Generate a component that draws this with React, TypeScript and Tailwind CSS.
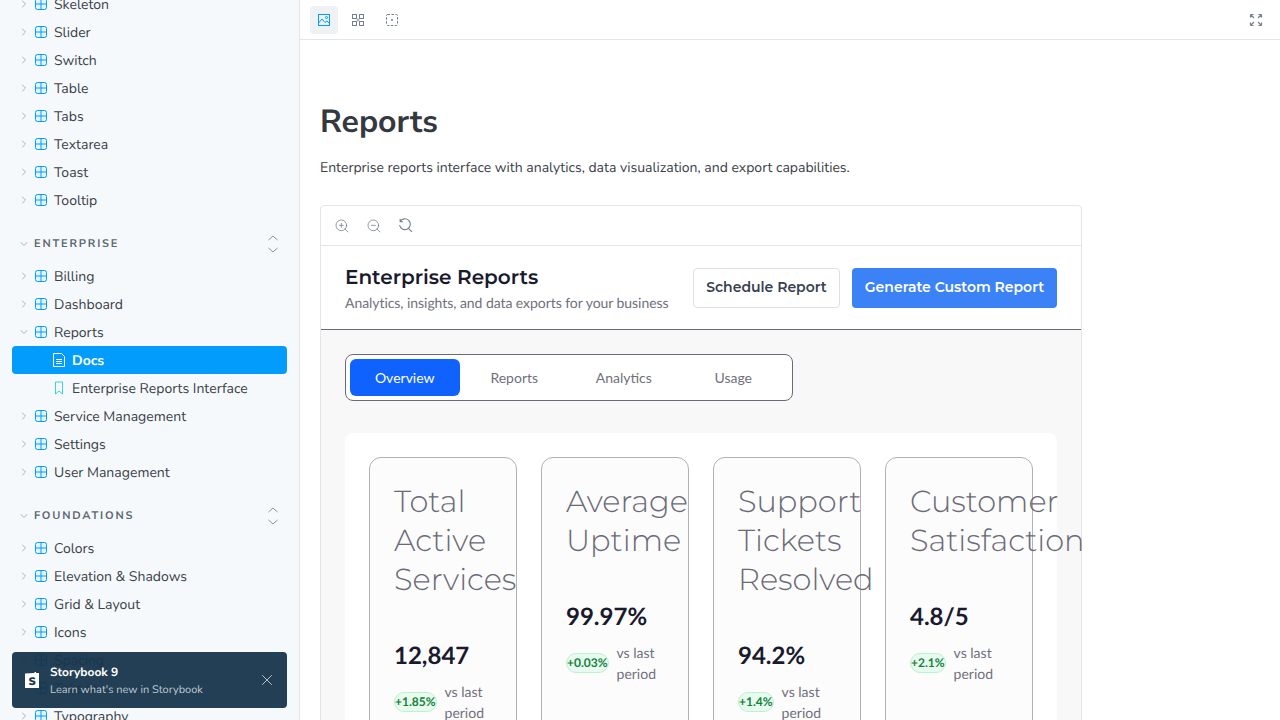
import { ChevronDown, ChevronRight, X, ZoomIn, ZoomOut } from "lucide-react";

const NUNITO = "font-['Nunito_Sans','Lato','Noto_Sans',sans-serif]";
const MONTSERRAT = "font-['Montserrat','Inter',sans-serif]";

const TOP_ITEMS = ["Skeleton", "Slider", "Switch", "Table", "Tabs", "Textarea", "Toast", "Tooltip"];
const BOTTOM_ITEMS = ["Colors", "Elevation & Shadows", "Grid & Layout", "Icons", "Spacing", "Tokens", "Typography"];

const STATS = [
  { title: "Total Active Services", value: "12,847", change: "+1.85%" },
  { title: "Average Uptime", value: "99.97%", change: "+0.03%" },
  { title: "Support Tickets Resolved", value: "94.2%", change: "+1.4%" },
  { title: "Customer Satisfaction", value: "4.8/5", change: "+2.1%" },
];

function ComponentIcon() {
  return (
    <svg width="12" height="12" viewBox="0 0 12 12" fill="none" className="shrink-0">
      <rect x="0.5" y="0.5" width="11" height="11" rx="2" fill="#e3f3ff" stroke="#029cfd" />
      <path d="M6 .5v11M.5 6h11" stroke="#029cfd" />
    </svg>
  );
}

function TreeRow({ label, open = false }: { label: string; open?: boolean }) {
  return (
    <div className="h-7 flex items-center pl-[18px] text-[#3a4148]">
      {open ? (
        <ChevronDown className="w-[12px] h-[12px] text-[#737f8c] mr-[5px]" strokeWidth={1.2} />
      ) : (
        <ChevronRight className="w-[12px] h-[12px] text-[#737f8c] mr-[5px]" strokeWidth={1.2} />
      )}
      <ComponentIcon />
      <span className="ml-[7px] mt-[2px] text-sm">{label}</span>
    </div>
  );
}

function SectionHeader({ label }: { label: string }) {
  return (
    <div className="h-[28px] flex items-center pl-[18px] pr-[19px]">
      <ChevronDown className="w-[12px] h-[12px] text-[#737f8c] mr-[4px]" strokeWidth={1.2} />
      <span className="text-[11px] font-bold tracking-[0.165em] text-[#5c6870]">{label}</span>
      <span className="ml-auto flex flex-col items-center text-[#8a95a0]">
        <svg width="14" height="20" viewBox="0 0 14 20" fill="none" stroke="currentColor">
          <path d="M2.5 6 7 2l4.5 4M2.5 14 7 18l4.5-4" />
        </svg>
      </span>
    </div>
  );
}

function Sidebar() {
  return (
    <aside className={`w-[300px] shrink-0 h-full bg-[#f6f9fc] border-r border-[#e3e6e8] overflow-hidden relative ${NUNITO}`}>
      <div className="-mt-[10px]">
        {TOP_ITEMS.map((item) => (
          <TreeRow key={item} label={item} />
        ))}
        <div className="mt-[16px] mb-[4px]">
          <SectionHeader label="ENTERPRISE" />
        </div>
        <TreeRow label="Billing" />
        <TreeRow label="Dashboard" />
        <TreeRow label="Reports" open />
        <div className="mx-[12px] h-7 rounded bg-[#029cfd] flex items-center pl-[40px] text-white">
          <svg width="14" height="14" viewBox="0 0 14 14" fill="none" stroke="white" className="shrink-0">
            <path d="M1.5 .5h8l3 3v10h-11z" />
            <path d="M4 6.5h6M4 8.5h6M4 10.5h6" />
          </svg>
          <span className="ml-[6px] mt-[2px] text-sm font-bold">Docs</span>
        </div>
        <div className="mx-[12px] h-7 flex items-center pl-[40px] text-[#3a4148]">
          <svg width="14" height="14" viewBox="0 0 14 14" fill="none" stroke="#37d5d3" className="shrink-0">
            <path d="M3.5 1h7v12L7 10l-3.5 3z" />
          </svg>
          <span className="ml-[6px] mt-[2px] text-sm">Enterprise Reports Interface</span>
        </div>
        <TreeRow label="Service Management" />
        <TreeRow label="Settings" />
        <TreeRow label="User Management" />
        <div className="mt-[16px] mb-[4px]">
          <SectionHeader label="FOUNDATIONS" />
        </div>
        {BOTTOM_ITEMS.map((item) => (
          <TreeRow key={item} label={item} />
        ))}
      </div>

      {/* What's new toast */}
      <div className="absolute left-[12px] bottom-[12px] w-[275px] h-[56px] rounded bg-[#16354c]/[0.95] flex items-center pl-[13px] pr-[11px] text-white">
        <svg width="14" height="16" viewBox="0 0 14 16" className="shrink-0">
          <path d="M0 1.5 9.5 1V0L11 0v1h3v15H0z" fill="white" />
          <text x="7" y="12.5" textAnchor="middle" fontSize="11" fontWeight="900" fill="#16354c">S</text>
        </svg>
        <div className="ml-[11px] flex-1 min-w-0">
          <div className="text-xs font-bold leading-[18px] pt-px">Storybook 9</div>
          <div className="text-[11px] leading-[15px] text-[#c1cbd3]">Learn what's new in Storybook</div>
        </div>
        <X className="w-[18px] h-[18px] text-[#d5dde3]" strokeWidth={1.1} />
      </div>
    </aside>
  );
}

function Toolbar() {
  return (
    <div className="h-10 shrink-0 border-b border-[#e3e6e8] flex items-center pl-[10px] pr-[17px]">
      <button className="w-7 h-7 rounded bg-[#eff2f4] flex items-center justify-center">
        <svg width="14" height="14" viewBox="0 0 14 14" fill="none" stroke="#029cfd">
          <rect x="1.5" y="1.5" width="11" height="11" />
          <path d="M1.5 10 5 6l3 3.5L10 8l2.5 2.5" />
          <circle cx="9.5" cy="4.5" r="1" />
        </svg>
      </button>
      <button className="w-7 h-7 ml-[6px] flex items-center justify-center">
        <svg width="14" height="14" viewBox="0 0 14 14" fill="none" stroke="#737f8c">
          <rect x="1.5" y="1.5" width="4" height="4" />
          <rect x="8.5" y="1.5" width="4" height="4" />
          <rect x="1.5" y="8.5" width="4" height="4" />
          <rect x="8.5" y="8.5" width="4" height="4" />
          <rect x="5.5" y="5.5" width="3" height="3" fill="#b4bcc4" stroke="none" />
        </svg>
      </button>
      <button className="w-7 h-7 ml-[6px] flex items-center justify-center">
        <svg width="14" height="14" viewBox="0 0 14 14" fill="none" stroke="#737f8c">
          <rect x="1.5" y="1.5" width="11" height="11" rx="1" strokeDasharray="2.5 1.5" />
          <circle cx="7" cy="7" r="1" fill="#737f8c" stroke="none" />
        </svg>
      </button>
      <svg width="14" height="14" viewBox="0 0 14 14" fill="none" stroke="#737f8c" strokeWidth="1.2" className="ml-auto">
        <path d="M5 5 1.5 1.5M1.5 1.5v3M1.5 1.5h3M9 5l3.5-3.5M12.5 1.5v3M12.5 1.5h-3M5 9l-3.5 3.5M1.5 12.5v-3M1.5 12.5h3M9 9l3.5 3.5M12.5 12.5v-3M12.5 12.5h-3" />
      </svg>
    </div>
  );
}

function StatCard({ title, value, change }: { title: string; value: string; change: string }) {
  return (
    <div className="w-[148px] shrink-0 rounded-xl border border-[#b1b1b7] bg-[#fcfcfc] p-6">
      <h3 className={`text-[30.4px] leading-[39px] font-light text-[#6b6b78] ${MONTSERRAT}`}>{title}</h3>
      <div className="mt-[39px] text-2xl leading-[36px] font-bold text-[#1a1a2e]">{value}</div>
      <div className="mt-[7px] flex items-center gap-2">
        <span className="shrink-0 rounded-full border border-[#bdf2cf] bg-[#e8fbef] text-xs font-bold leading-[18px] text-[#15803d]">{change}</span>
        <span className="text-sm leading-[21px] text-[#70707d]">vs last period</span>
      </div>
    </div>
  );
}

function Preview() {
  return (
    <div className="w-[762px] rounded border border-[#e3e6e8] font-['Lato',sans-serif]">
      <div className="h-10 border-b border-[#e3e6e8] flex items-center pl-[13px] gap-[16px] text-[#6b7680]">
        <ZoomIn className="w-4 h-4" strokeWidth={1.1} />
        <ZoomOut className="w-4 h-4" strokeWidth={1.1} />
        <svg width="15" height="15" viewBox="0 0 14 14" fill="none" stroke="#737f8c">
          <path d="M2 3.5A5 5 0 1 1 1.5 6.5M2 .8v2.7h2.7M9.5 9.5l3.5 3.5" />
        </svg>
      </div>
      <div className="h-[84px] border-b border-[#6b6b78] flex items-center justify-between px-6 bg-white">
        <div className="mt-[2px]">
          <h2 className={`text-xl leading-[28px] font-semibold text-[#1a1a2e] ${MONTSERRAT}`}>Enterprise Reports</h2>
          <p className="text-sm leading-[21px] tracking-[-0.055px] text-[#70707d]">Analytics, insights, and data exports for your business</p>
        </div>
        <div className={`flex gap-3 text-sm font-semibold ${MONTSERRAT}`}>
          <button className="h-10 w-[147px] pb-[2px] rounded border border-[#e0e0e0] bg-white text-[#374151]">Schedule Report</button>
          <button className="h-10 w-[205px] pb-[2px] rounded bg-[#3b82f6] text-white">Generate Custom Report</button>
        </div>
      </div>
      <div className="bg-[#f8f8f8] px-6 pt-6">
        <div className="w-[448px] h-[47px] rounded-lg border border-[#6b6b78] bg-white p-1 flex text-sm text-[#70707d]">
          <button className="flex-1 rounded-md bg-[#0f62fe] text-white">Overview</button>
          <button className="flex-1">Reports</button>
          <button className="flex-1">Analytics</button>
          <button className="flex-1">Usage</button>
        </div>
        <div className="mt-8 rounded-lg bg-white p-6 flex gap-6">
          {STATS.map((stat) => (
            <StatCard key={stat.title} {...stat} />
          ))}
        </div>
      </div>
    </div>
  );
}

export default function App() {
  return (
    <div className="w-[1280px] h-[720px] overflow-hidden flex bg-white antialiased [text-rendering:geometricPrecision]">
      <Sidebar />
      <main className="flex-1 min-w-0 h-full flex flex-col overflow-hidden">
        <Toolbar />
        <div className="px-5 pt-[62px]">
          <h1 className={`text-[32px] leading-[42px] font-bold text-[#33393e] ${NUNITO}`}>Reports</h1>
          <p className={`mt-[12px] text-sm leading-[24px] text-[#3a4148] ${NUNITO}`}>
            Enterprise reports interface with analytics, data visualization, and export capabilities.
          </p>
          <div className="mt-[25px]">
            <Preview />
          </div>
        </div>
      </main>
    </div>
  );
}
